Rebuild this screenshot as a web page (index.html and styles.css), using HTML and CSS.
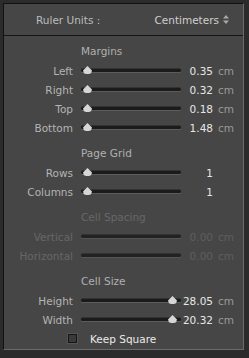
FILE: index.html
```html
<!DOCTYPE html>
<html lang="en">
<head>
    <meta charset="UTF-8">
    <title>Print Layout</title>
    <link rel="stylesheet" href="styles.css">
</head>
<body>
    <div class="panel">
        <div class="units">
            <span class="units-label">Ruler Units :</span>
            <span class="units-value">Centimeters
                <svg class="updown" width="6" height="9" viewBox="0 0 6 9"><path d="M3 0 L6 3.5 L0 3.5 Z M3 9 L6 5.5 L0 5.5 Z" fill="#a8a8a8"/></svg>
            </span>
        </div>

        <div class="section">
            <div class="section-title">Margins</div>
            <div class="row">
                <span class="label">Left</span>
                <div class="slider"><div class="track"></div><span class="thumb" style="left: 2px"></span></div>
                <span class="value">0.35</span><span class="unit">cm</span>
            </div>
            <div class="row">
                <span class="label">Right</span>
                <div class="slider"><div class="track"></div><span class="thumb" style="left: 2px"></span></div>
                <span class="value">0.32</span><span class="unit">cm</span>
            </div>
            <div class="row">
                <span class="label">Top</span>
                <div class="slider"><div class="track"></div><span class="thumb" style="left: 2px"></span></div>
                <span class="value">0.18</span><span class="unit">cm</span>
            </div>
            <div class="row">
                <span class="label">Bottom</span>
                <div class="slider"><div class="track"></div><span class="thumb" style="left: 2px"></span></div>
                <span class="value">1.48</span><span class="unit">cm</span>
            </div>
        </div>

        <div class="section">
            <div class="section-title">Page Grid</div>
            <div class="row">
                <span class="label">Rows</span>
                <div class="slider"><div class="track"></div><span class="thumb" style="left: 2px"></span></div>
                <span class="value">1</span><span class="unit"></span>
            </div>
            <div class="row">
                <span class="label">Columns</span>
                <div class="slider"><div class="track"></div><span class="thumb" style="left: 2px"></span></div>
                <span class="value">1</span><span class="unit"></span>
            </div>
        </div>

        <div class="section disabled">
            <div class="section-title">Cell Spacing</div>
            <div class="row">
                <span class="label">Vertical</span>
                <div class="slider"><div class="track"></div></div>
                <span class="value">0.00</span><span class="unit">cm</span>
            </div>
            <div class="row">
                <span class="label">Horizontal</span>
                <div class="slider"><div class="track"></div></div>
                <span class="value">0.00</span><span class="unit">cm</span>
            </div>
        </div>

        <div class="section">
            <div class="section-title">Cell Size</div>
            <div class="row">
                <span class="label">Height</span>
                <div class="slider"><div class="track"></div><span class="thumb" style="left: 87px"></span></div>
                <span class="value">28.05</span><span class="unit">cm</span>
            </div>
            <div class="row">
                <span class="label">Width</span>
                <div class="slider"><div class="track"></div><span class="thumb" style="left: 87px"></span></div>
                <span class="value">20.32</span><span class="unit">cm</span>
            </div>
            <label class="check-row">
                <span class="checkbox"></span>
                <span class="check-text">Keep Square</span>
            </label>
        </div>
    </div>
</body>
</html>
```

FILE: styles.css
```css
body { margin: 0; background: #2b2b2b; font-family: "DejaVu Sans", sans-serif; font-size: 10.5px; color: #b4b4b4; }
.panel { margin: 3px 5px 5px 3px; height: 347px; background: #464646; border-top: 1px solid #121212; border-left: 1px solid #121212; border-right: 1px solid #6a6a6a; border-bottom: 1px solid #6a6a6a; box-sizing: border-box; }
.units { display: flex; justify-content: space-between; align-items: center; height: 31px; padding: 0 14px 0 32px; border-bottom: 1px solid #161616; color: #bcbcbc; }
.units-value { display: flex; align-items: center; gap: 4px; color: #d0d0d0; }
.updown { display: block; }
.section { margin-top: 7px; }
.units + .section { margin-top: 6px; }
.section-title { height: 19px; line-height: 19px; padding-left: 77px; color: #b0b0b0; }
.row { display: flex; align-items: center; height: 19px; }
.label { width: 69px; text-align: right; }
.slider { position: relative; width: 100px; height: 19px; margin-left: 8px; }
.track { position: absolute; left: 0; right: 0; top: 8px; height: 3px; background: #1b1b1b; border-radius: 2px; box-shadow: 0 1px 0 #5c5c5c, 0 -1px 0 #333; }
.thumb { position: absolute; top: 5px; width: 9px; height: 8px; background: #d6d6d6; clip-path: polygon(50% 0, 100% 55%, 90% 90%, 65% 100%, 35% 100%, 10% 90%, 0 55%); }
.value { width: 32px; text-align: right; color: #e6e6e6; }
.unit { margin-left: 5px; color: #9a9a9a; }
.disabled .section-title, .disabled .label { color: #666; }
.disabled .value, .disabled .unit { color: #5e5e5e; }
.disabled .track { background: #222; box-shadow: 0 1px 0 #555, 0 -1px 0 #333; }
.check-row { display: flex; align-items: center; height: 19px; padding-left: 64px; }
.checkbox { width: 7px; height: 7px; border: 1px solid #151515; background: #3a3a3a; box-shadow: 0 0 0 1px #555; }
.check-text { margin-left: 13px; color: #eaeaea; }
```
